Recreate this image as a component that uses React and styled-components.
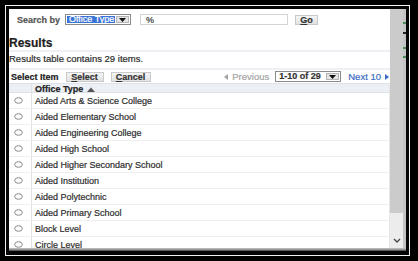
import React from "react";
import styled, { createGlobalStyle } from "styled-components";

//-----------------------STYLE-----------------------//

const GlobalStyle = createGlobalStyle`
  html, body {
    margin: 0;
    padding: 0;
    background: #000;
  }
  body {
    font-family: "Liberation Sans", Arial, sans-serif;
  }
`;

const FrameStyle = styled.div`
  width: 418px;
  height: 261px;
  box-sizing: border-box;
  padding: 5px 8px 5px 5px;
  background: #000;
`;

const WhiteEdgeStyle = styled.div`
  border: 1px solid #f2f2f2;
  height: 100%;
  box-sizing: border-box;
`;

const InnerBlackStyle = styled.div`
  background: #050505;
  padding: 3px 3px 4px 3px;
  height: 100%;
  box-sizing: border-box;
`;

const WindowStyle = styled.div`
  display: flex;
  flex-direction: column;
  height: 100%;
`;

const WindowBodyStyle = styled.div`
  display: flex;
  height: 239px;
`;

const BottomShadeStyle = styled.div`
  height: 3px;
  background: linear-gradient(#c9c9c9, #8c8c8c 60%, #3a3a3a);
`;

const ContentStyle = styled.div`
  width: 381px;
  height: 239px;
  overflow: hidden;
  background: #fff;
  color: #333;
  font-size: 9px;
  -webkit-text-stroke: 0.2px currentColor;
`;

const ScrollbarStyle = styled.div`
  width: 13px;
  display: flex;
  flex-direction: column;
  background: #ececec;
`;

const ThumbStyle = styled.div`
  height: 204px;
  background: #cbcbcb;
`;

const TrackStyle = styled.div`
  flex: 1;
  display: flex;
  align-items: flex-end;
  justify-content: center;
  padding-bottom: 5px;
`;

const StripStyle = styled.div`
  width: 3px;
  background: linear-gradient(
    #c4c4c4 0 13px,
    #4c8a5a 13px 15px,
    #c4c4c4 15px 23px,
    #222 23px 25px,
    #c4c4c4 25px 38px,
    #4c8a5a 38px 40px,
    #c4c4c4 40px 47px,
    #4c8a5a 47px 49px,
    #c4c4c4 49px
  );
`;

const SearchRowStyle = styled.div`
  display: flex;
  align-items: center;
  height: 11px;
  margin-top: 5px;
  padding-left: 8px;
`;

const LabelStyle = styled.span`
  font-weight: bold;
  color: ${(p) => p.color || "#555"};
  margin-right: ${(p) => p.gap || 0}px;
  white-space: nowrap;
`;

const SelectBoxStyle = styled.div`
  display: flex;
  align-items: stretch;
  width: ${(p) => p.width}px;
  height: ${(p) => p.height}px;
  box-sizing: border-box;
  border: 1px solid #8a8a8a;
  background: #fff;
  margin-right: ${(p) => p.gap || 0}px;
  padding: 1px;
`;

const SelectValueStyle = styled.div`
  flex: 1;
  display: flex;
  align-items: center;
  padding-left: 2px;
  background: ${(p) => (p.active ? "#3a73d6" : "transparent")};
  color: ${(p) => (p.active ? "#fff" : "#333")};
  font-weight: ${(p) => (p.active ? "normal" : "bold")};
  white-space: nowrap;
  line-height: 1;
`;

const ArrowBoxStyle = styled.div`
  width: 11px;
  display: flex;
  align-items: center;
  justify-content: center;
  background: #e4e4e4;
  border: 1px solid #b5b5b5;
  margin-left: 1px;
`;

const InputStyle = styled.div`
  width: 148px;
  height: 11px;
  box-sizing: border-box;
  border: 1px solid #d4d4d4;
  padding-left: 5px;
  display: flex;
  align-items: center;
  color: #333;
  margin-right: 7px;
`;

const ButtonStyle = styled.div`
  width: ${(p) => p.width}px;
  height: ${(p) => p.height || 10}px;
  box-sizing: border-box;
  background: linear-gradient(#f4f4f4, #e2e2e2);
  border: 1px solid #c9c9c9;
  display: flex;
  align-items: center;
  justify-content: center;
  font-weight: bold;
  color: #333;
  margin-right: ${(p) => p.gap || 0}px;
  u {
    text-decoration: underline;
  }
`;

const HeadingStyle = styled.div`
  margin-top: 11px;
  height: 14px;
  line-height: 14px;
  font-size: 12px;
  font-weight: bold;
  color: #1e1e1e;
`;

const DividerStyle = styled.div`
  height: 2px;
  background: #edf0f4;
`;

const SummaryStyle = styled.div`
  height: 16px;
  line-height: 14px;
  font-size: 9.5px;
  color: #2c2c2c;
`;

const ToolbarStyle = styled.div`
  height: 13px;
  display: flex;
  align-items: center;
  padding-left: 2px;
  padding-right: 1px;
`;

const PagerStyle = styled.div`
  margin-left: auto;
  display: flex;
  align-items: center;
`;

const PagerLinkStyle = styled.span`
  display: flex;
  align-items: center;
  gap: 4px;
  font-size: 9.5px;
  color: ${(p) => (p.disabled ? "#a3a3a3" : "#3a6cc2")};
  margin-right: ${(p) => p.gap || 0}px;
`;

const TableStyle = styled.div`
  width: 381px;
  box-sizing: border-box;
  border-right: 1px solid #e6e6e6;
`;

const HeaderRowStyle = styled.div`
  display: grid;
  grid-template-columns: 23px 1fr;
  height: 10px;
  box-sizing: border-box;
  background: #eceff4;
  border-top: 1px solid #dde2e9;
  border-bottom: 1px solid #dde2e9;
`;

const RowStyle = styled.div`
  display: grid;
  grid-template-columns: 23px 1fr;
  height: 16px;
  box-sizing: border-box;
  border-bottom: 1px solid #efefef;
`;

const CellStyle = styled.div`
  display: flex;
  align-items: center;
  padding-left: ${(p) => p.pad || 0}px;
  border-right: ${(p) => (p.divider ? "1px solid #e2e2e2" : "none")};
  font-weight: ${(p) => (p.bold ? "bold" : "normal")};
  color: ${(p) => (p.bold ? "#222" : "#2e2e2e")};
  white-space: nowrap;
  gap: 4px;
`;

//-----------------------COMPONENT-----------------------//

const DownArrow = () => (
  <svg width="7" height="4" viewBox="0 0 7 4">
    <path d="M0 0 L7 0 L3.5 4 Z" fill="#111" />
  </svg>
);

const Radio = () => (
  <svg width="9" height="7" viewBox="0 0 9 7">
    <ellipse cx="4.5" cy="3.5" rx="3.8" ry="2.8" fill="#fff" stroke="#7c7c7c" strokeWidth="0.9" />
  </svg>
);

const Chevron = () => (
  <svg width="8" height="5" viewBox="0 0 8 5">
    <path d="M1 1 L4 4 L7 1" fill="none" stroke="#444" strokeWidth="1.3" />
  </svg>
);

const Triangle = ({ dir, color }) => (
  <svg width="4" height="6" viewBox="0 0 4 6">
    <path d={dir === "left" ? "M4 0 L0 3 L4 6 Z" : "M0 0 L4 3 L0 6 Z"} fill={color} />
  </svg>
);

const SortUp = () => (
  <svg width="8" height="5" viewBox="0 0 8 5">
    <path d="M0 5 L4 0.5 L8 5 Z" fill="#555" />
  </svg>
);

const officeTypes = [
  "Aided Arts & Science College",
  "Aided Elementary School",
  "Aided Engineering College",
  "Aided High School",
  "Aided Higher Secondary School",
  "Aided Institution",
  "Aided Polytechnic",
  "Aided Primary School",
  "Block Level",
  "Circle Level",
];

const App = () => {
  return (
    <>
      <GlobalStyle />
      <FrameStyle>
        <WhiteEdgeStyle>
          <InnerBlackStyle>
            <WindowStyle>
              <WindowBodyStyle>
                <ContentStyle>
                  {/* search row */}
                  <SearchRowStyle>
                    <LabelStyle gap={5}>Search by</LabelStyle>
                    <SelectBoxStyle width={66} height={11} gap={9}>
                      <SelectValueStyle active>Office Type</SelectValueStyle>
                      <ArrowBoxStyle>
                        <DownArrow />
                      </ArrowBoxStyle>
                    </SelectBoxStyle>
                    <InputStyle>%</InputStyle>
                    <ButtonStyle width={23} height={10}>
                      <span>
                        <u>G</u>o
                      </span>
                    </ButtonStyle>
                  </SearchRowStyle>

                  <HeadingStyle>Results</HeadingStyle>
                  <DividerStyle />
                  <SummaryStyle>Results table contains 29 items.</SummaryStyle>
                  <DividerStyle />

                  {/* toolbar */}
                  <ToolbarStyle>
                    <LabelStyle color="#222" gap={7}>
                      Select Item
                    </LabelStyle>
                    <ButtonStyle width={38} gap={7}>
                      <span>
                        <u>S</u>elect
                      </span>
                    </ButtonStyle>
                    <ButtonStyle width={40}>
                      <span>
                        <u>C</u>ancel
                      </span>
                    </ButtonStyle>
                    <PagerStyle>
                      <PagerLinkStyle disabled gap={6}>
                        <Triangle dir="left" color="#a3a3a3" />
                        Previous
                      </PagerLinkStyle>
                      <SelectBoxStyle width={66} height={11} gap={7}>
                        <SelectValueStyle>1-10 of 29</SelectValueStyle>
                        <ArrowBoxStyle>
                          <DownArrow />
                        </ArrowBoxStyle>
                      </SelectBoxStyle>
                      <PagerLinkStyle>
                        Next 10
                        <Triangle dir="right" color="#3a6cc2" />
                      </PagerLinkStyle>
                    </PagerStyle>
                  </ToolbarStyle>

                  {/* results table */}
                  <TableStyle>
                    <HeaderRowStyle>
                      <CellStyle divider />
                      <CellStyle bold pad={3}>
                        Office Type <SortUp />
                      </CellStyle>
                    </HeaderRowStyle>
                    {officeTypes.map((item) => (
                      <RowStyle key={item}>
                        <CellStyle divider pad={5}>
                          <Radio />
                        </CellStyle>
                        <CellStyle pad={3}>{item}</CellStyle>
                      </RowStyle>
                    ))}
                  </TableStyle>
                </ContentStyle>
                <ScrollbarStyle>
                  <ThumbStyle />
                  <TrackStyle>
                    <Chevron />
                  </TrackStyle>
                </ScrollbarStyle>
                <StripStyle />
              </WindowBodyStyle>
              <BottomShadeStyle />
            </WindowStyle>
          </InnerBlackStyle>
        </WhiteEdgeStyle>
      </FrameStyle>
    </>
  );
};

export default App;
